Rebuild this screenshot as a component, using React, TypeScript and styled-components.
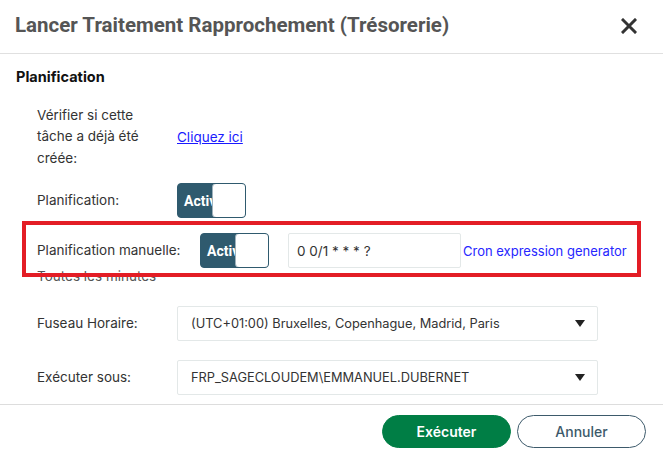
import React from "react";
import styled, { createGlobalStyle } from "styled-components";

const Global = createGlobalStyle`
  html, body { margin: 0; padding: 0; background: #fff; }
  body { font-family: Inter, "Noto Sans", sans-serif; color: #333; }
  * { box-sizing: border-box; }
`;

const Dialog = styled.div`
  width: 663px;
  height: 455px;
  display: flex;
  flex-direction: column;
  background: #fff;
  overflow: hidden;
`;

const Header = styled.div`
  height: 54px;
  display: flex;
  align-items: center;
  justify-content: space-between;
  padding: 0 26px 4px 15px;
  border-bottom: 1px solid #e0e0e0;
`;

const Title = styled.h1`
  margin: 0;
  font-family: Roboto, "Liberation Sans", sans-serif;
  font-size: 20.5px;
  font-weight: 700;
  color: #555;
`;

const Close = styled.button`
  border: 0;
  background: none;
  padding: 0;
  width: 16px;
  height: 16px;
  display: flex;
  margin-top: 2px;
  cursor: pointer;
`;

const Body = styled.div`
  flex: 1;
  padding: 14px 22px 0 16px;
`;

const SectionTitle = styled.h2`
  margin: 0 0 19px 0;
  font-size: 14.5px;
  font-weight: 700;
  color: #111;
`;

const Row = styled.div<{ $mt?: number; $h?: number }>`
  position: relative;
  display: flex;
  align-items: center;
  margin-top: ${(p) => p.$mt ?? 0}px;
  min-height: ${(p) => p.$h ?? 35}px;
  padding-left: 21px;
`;

const Label = styled.div<{ $w?: number }>`
  width: ${(p) => p.$w ?? 140}px;
  flex-shrink: 0;
  font-size: 13.5px;
  line-height: 21.5px;
  color: #333;
`;

const Link = styled.a<{ $color?: string }>`
  font-size: ${(p) => (p.$color ? 13 : 13.5)}px;
  color: ${(p) => p.$color ?? "#1a1aff"};
  text-decoration: ${(p) => (p.$color ? "none" : "underline")};
  cursor: pointer;
`;

const Toggle = styled.div`
  width: 69px;
  height: 35px;
  border-radius: 4px;
  background: #2f5a6e;
  border: 1px solid #2f5a6e;
  display: flex;
  align-items: center;
  position: relative;
  overflow: hidden;
`;

const ToggleText = styled.span`
  color: #fff;
  font-family: Roboto, "Liberation Sans", sans-serif;
  font-weight: 700;
  font-size: 14px;
  padding-left: 6px;
  white-space: nowrap;
`;

const Knob = styled.span`
  position: absolute;
  top: -1px;
  right: -1px;
  bottom: -1px;
  width: 34px;
  background: #fff;
  border-radius: 4px;
  border: 1px solid #9fb2bc;
`;

const TextInput = styled.div`
  margin-left: 19px;
  width: 173px;
  height: 35px;
  border: 1px solid #e3e8e8;
  border-radius: 2px;
  display: flex;
  align-items: center;
  padding-left: 8px;
  font-size: 13.5px;
  color: #333;
  margin-right: 2px;
`;

const Highlight = styled.div`
  position: absolute;
  left: 6px;
  top: -12px;
  width: 619px;
  height: 56px;
  border: 4px solid #e31d25;
  pointer-events: none;
  z-index: 2;
`;

const Hint = styled.div`
  padding-left: 21px;
  font-size: 13.5px;
  color: #555;
  margin-top: -1px;
  line-height: 18px;
`;

const Select = styled.div`
  width: 421px;
  height: 35px;
  border: 1px solid #e3e8e8;
  border-radius: 2px;
  display: flex;
  align-items: center;
  justify-content: space-between;
  padding: 0 12px 0 13px;
  font-size: 12.8px;
  color: #333;
`;

const Caret = styled.span`
  width: 0;
  height: 0;
  border-left: 5px solid transparent;
  border-right: 5px solid transparent;
  border-top: 7px solid #222;
`;

const Footer = styled.div`
  height: 51px;
  border-top: 1px solid #ddd;
  display: flex;
  align-items: flex-start;
  justify-content: flex-end;
  gap: 6px;
  padding: 10px 17px 0 0;
`;

const Button = styled.button<{ $primary?: boolean }>`
  width: 129px;
  height: 33px;
  border-radius: 17px;
  font-family: Inter, "Noto Sans", sans-serif;
  font-size: 14px;
  font-weight: ${(p) => (p.$primary ? 600 : 500)};
  background: ${(p) => (p.$primary ? "#007e45" : "#fff")};
  color: ${(p) => (p.$primary ? "#fff" : "#3d5a6b")};
  border: 1px solid ${(p) => (p.$primary ? "#007e45" : "#3d5a6b")};
  cursor: pointer;
`;

export default function App() {
  return (
    <>
      <Global />
      <Dialog>
        <Header>
          <Title>Lancer Traitement Rapprochement (Trésorerie)</Title>
          <Close aria-label="Fermer">
            <svg width="16" height="16" viewBox="0 0 16 16">
              <path d="M2 2 L14 14 M14 2 L2 14" stroke="#333" strokeWidth="3" strokeLinecap="square" />
            </svg>
          </Close>
        </Header>
        <Body>
          <SectionTitle>Planification</SectionTitle>
          <Row $h={66}>
            <Label $w={140}>
              Vérifier si cette
              <br />
              tâche a déjà été
              <br />
              créée:
            </Label>
            <Link>Cliquez ici</Link>
          </Row>
          <Row $mt={13}>
            <Label $w={140}>Planification:</Label>
            <Toggle>
              <ToggleText>Activé</ToggleText>
              <Knob />
            </Toggle>
          </Row>
          <Row $mt={15}>
            <Highlight />
            <Label $w={163}>Planification manuelle:</Label>
            <Toggle>
              <ToggleText>Activé</ToggleText>
              <Knob />
            </Toggle>
            <TextInput>0 0/1 * * * ?</TextInput>
            <Link $color="#2626ff">Cron expression generator</Link>
          </Row>
          <Hint>Toutes les minutes</Hint>
          <Row $mt={21}>
            <Label $w={140}>Fuseau Horaire:</Label>
            <Select>
              <span>(UTC+01:00) Bruxelles, Copenhague, Madrid, Paris</span>
              <Caret />
            </Select>
          </Row>
          <Row $mt={19}>
            <Label $w={140}>Exécuter sous:</Label>
            <Select>
              <span>FRP_SAGECLOUDEM\EMMANUEL.DUBERNET</span>
              <Caret />
            </Select>
          </Row>
        </Body>
        <Footer>
          <Button $primary>Exécuter</Button>
          <Button>Annuler</Button>
        </Footer>
      </Dialog>
    </>
  );
}
